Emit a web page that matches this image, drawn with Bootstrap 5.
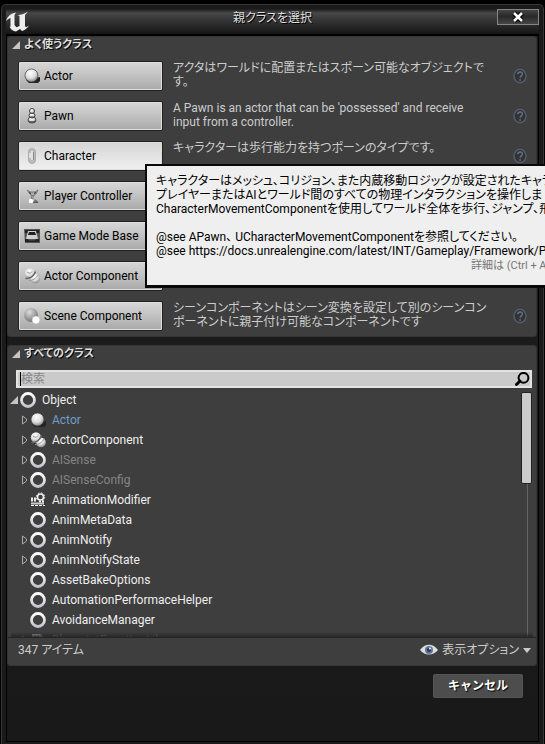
<!DOCTYPE html>
<html lang="ja">
<head>
<meta charset="utf-8">
<meta name="viewport" content="width=device-width, initial-scale=1">
<title>親クラスを選択</title>
<link href="https://cdn.jsdelivr.net/npm/bootstrap@5.3.0/dist/css/bootstrap.min.css" rel="stylesheet">
<style>
body{background:#000;color:#ccc;font:12px/14px Roboto,"Noto Sans CJK JP",sans-serif;font-feature-settings:"palt";overflow:hidden}
.window{margin:4px 1px 0;padding:4px 4px 2px;min-height:calc(100vh - 4px);background:#1a1a1a;border:1px solid #363636;border-bottom:0;border-radius:5px 5px 0 0}
.titlebar{height:25px;background:linear-gradient(#1c1c1c,#484848 4px,#353535 11px,#151515)}
.titlebar h1{font-size:12px;line-height:18px;color:#ddd;text-shadow:1px 1px #000}
.logo-slot{width:42px;line-height:0}
.close-btn{width:42px;height:16px;border:1px solid #858585;background:linear-gradient(#444,#292929 45%,#454545);line-height:0}
.client{border:1px solid #000;border-width:2px 1px 1px;background:linear-gradient(#1c1c1c,#191919);padding-right:1px}
.panel{background:#3e3e3e;border-radius:3px;border:1px solid #353535}
.panel h2{font-size:11px;line-height:16px;font-weight:700;color:#ddd;text-shadow:1px 1px #000}
.panel + .panel{margin-top:8px}
.tri{width:8px;height:8px}
.class-rows{padding:0 9px 0 10px}
.class-row{height:40px;gap:10px}
.class-row:last-child{height:35px}
.class-btn{width:145px;height:30px;border:1px solid #222;border-radius:2px;background:linear-gradient(#d8d8d8,#a9a9a9);box-shadow:inset 0 0 0 1px #ddd;color:#000;padding:0 5px;text-align:left}
.class-btn.hovered{background:linear-gradient(#d5d5d5,#f0f0f0)}
.ic{width:16px;height:16px;flex:none}
.help{line-height:0;padding-top:7px}
.search{background:#cacaca;border:2px solid #e2e4e2;height:18px;padding-left:2px}
.search input{background:none;border:0;outline:0;padding:0;height:14px;line-height:14px;color:#000}
.search input::placeholder{color:#888;opacity:1}
.caret{width:1px;height:14px;background:#000}
.tree-view{height:250px;overflow:hidden;position:relative;border-bottom:1px solid #252525}
.tree-view::after{content:"";position:absolute;inset:auto 3px 0;height:5px;background:linear-gradient(transparent,#222c)}
.tree-list{padding-top:2px}
.tree-list li{height:20px;color:#eee;padding-left:11px}
.tree-list li.root{padding-left:1px}
.tree-list .ic{margin:0 6px 0 2px}
.tree-list .used{color:#6f9fc9}
.tree-list .dim{color:#858585}
.tree-list .faded{opacity:.8}
.twist{width:9px;height:12px;border:0;padding:0;background:none;line-height:0;flex:none}
.track{width:11px;background:linear-gradient(90deg,transparent 6px,#666 6px,#666 7px,transparent 7px)}
.thumb{height:92px;background:#cbcbcb;border:1px solid #222;border-radius:2px}
.status{height:27px;padding:0 5px 3px 10px}
.view-options{font:inherit}
.cancel{width:90px;height:24px;background:#4d4d4d;border:1px solid #555;border-radius:2px;color:#fff;font-size:12px;font-weight:700;text-shadow:1px 1px 1px #000}
.actions{padding:8px 14px 0}
.tip{left:145px;top:164px;height:124px;border:2px solid #080808;border-width:2px 0 3px 2px;background:#efefef;color:#000;padding:8px 0 0 9px;white-space:nowrap}
.tip small{font-size:11px;line-height:14px;color:#777;margin-left:315px}
</style>
<script src="https://cdn.jsdelivr.net/npm/bootstrap@5.3.0/dist/js/bootstrap.bundle.min.js"></script>
</head>
<body>
<svg width="0" height="0" class="position-absolute" aria-hidden="true">
<defs>
<radialGradient id="ball" cx=".42" cy=".3" r=".75"><stop offset="0" stop-color="#fff"/><stop offset=".55" stop-color="#ddd"/><stop offset="1" stop-color="#777"/></radialGradient>
<radialGradient id="grey" cx=".4" cy=".3" r=".7"><stop offset="0" stop-color="#ddd"/><stop offset="1" stop-color="#777"/></radialGradient>
<linearGradient id="ringfill" x2="0" y2="1"><stop offset="0" stop-color="#fff"/><stop offset="1" stop-color="#c4c4cc"/></linearGradient>
<symbol id="open" viewBox="0 0 8 8"><path d="M8 0v8H0z" fill="#c5c5c5"/></symbol>
<symbol id="shut" viewBox="0 0 9 12"><path d="M3.500 2v8L7.500 7V5z" fill="none" stroke="#aaa"/></symbol>
<symbol id="actor" viewBox="0 0 16 16"><path d="M2 12l3 3h9l2-2v-4z" fill="#222"/><circle cx="7.500" cy="7.500" r="6.500" fill="url(#ball)" stroke="#444" stroke-width=".7"/></symbol>
<symbol id="pawn" viewBox="0 0 16 16"><g fill="url(#ball)" stroke="#444"><ellipse cx="8" cy="12" rx="4" ry="3"/><ellipse cx="8" cy="7.500" rx="3" ry="2.500"/><circle cx="8" cy="3" r="2.500"/></g><path d="M5 13c2 1 4 1 6 0M6 9h4" stroke="#444" fill="none"/></symbol>
<symbol id="capsule" viewBox="0 0 16 16"><rect x="4.500" y=".5" width="7" height="15" rx="3.500" fill="#bbb" stroke="#aaa"/><path d="M8 3v9M6 5v5" stroke="#eee" stroke-width="1.500"/><path d="M9.500 4v8" stroke="#888"/></symbol>
<symbol id="controller" viewBox="0 0 16 16"><path d="M3 2l3 2h5l3-2-2 4-3 2-3-2zM7 7l1 5M9.500 7l-1 5" fill="#aaa" stroke="#777"/><path d="M5 4.500l2 1M10 5.500l2-1" stroke="#333"/><circle cx="7" cy="13" r="2.300" fill="#fff"/><path d="M9 14.500h5l-3-3" stroke="#555" fill="#777"/></symbol>
<symbol id="mode" viewBox="0 0 16 16"><path d="M0 1h16v14H1z" fill="#555"/><path d="M1 2h14v3H1z" fill="#222"/><path d="M4 3h8l2 8H2z" fill="#d0d0d0"/><path d="M5 4h6l1 3H4z" fill="#222"/><path d="M1 11h3l1 1.500h6l1-1.500h3v3H1z" fill="#222"/></symbol>
<symbol id="component" viewBox="0 0 16 16"><circle cx="6" cy="5.500" r="5.200" fill="url(#ball)"/><circle cx="11" cy="10.500" r="4.800" fill="url(#ball)"/><path d="M1.500 10.500C6 11 10 8 11.500 3.500" stroke="#666" fill="none" stroke-width="1.500"/><path d="M5 12.500c4 0 7-2 9.500-6M3 4l3 1.500 2-2" stroke="#999" fill="none"/></symbol>
<symbol id="scene" viewBox="0 0 16 16"><circle cx="7" cy="7" r="7" fill="url(#grey)"/><circle cx="12" cy="12" r="4" fill="#fff" stroke="#aaa" stroke-width=".6"/></symbol>
<symbol id="ring" viewBox="0 0 16 16"><circle cx="8" cy="8" r="6.500" fill="none" stroke="url(#ringfill)" stroke-width="2.800"/></symbol>
<symbol id="modifier" viewBox="0 0 16 16"><circle cx="10.500" cy="5" r="3" fill="none" stroke="#eee" stroke-width="1.600"/><circle cx="10.500" cy="5" r="4.200" fill="none" stroke="#eee" stroke-dasharray="1.600 1.700"/><path d="M1 6.500h5M1 8.500h6m2 1h6" stroke="#eee" stroke-dasharray="2 1" stroke-width="2"/><path d="M1 10.500h13v2H1z" fill="#ccc"/><path d="M1 13.500h14" stroke="#eee" stroke-dasharray="3 1"/></symbol>
<symbol id="library" viewBox="0 0 16 16"><path d="M2 2h8l5 4v10H3z" fill="#aaa"/><path d="M5 4v9M8 4l3 9M5 8h6" stroke="#333" stroke-width="1.500"/></symbol>
<symbol id="question" viewBox="0 0 14 16"><ellipse cx="7" cy="8" rx="6" ry="6.700" fill="#303236" stroke="#505a68" stroke-width="1.500"/><path d="M4.800 6.200c0-3 4.600-3 4.600-.2C9.400 8 7.100 7.800 7.100 9.800" fill="none" stroke="#667180" stroke-width="1.500"/><circle cx="7.100" cy="12" r=".9" fill="#667180"/></symbol>
</defs>
</svg>

<main class="window d-flex flex-column">
  <header class="titlebar d-flex align-items-start">
    <div class="logo-slot"><svg width="24" height="24" viewBox="0 0 24 24"><path d="M0 12C1.500 7 5 4.500 10 3.500L8.500 6v10l2 2.200 3-1.200V7l-2-1c4 0 6-.8 10.500-3.500L19 6v11l1 1.200 3-1.700c-2 3-4 4.500-7 5.500l-2-2-4 2.500c-3-.5-5.500-2-6.500-5l1 .2V9C2.500 9.500 1.500 10.500 0 12z" fill="#eee"/></svg></div>
    <h1 class="flex-grow-1 text-center mb-0 fw-normal">親クラスを選択</h1>
    <button class="close-btn p-0" aria-label="閉じる"><svg width="12" height="12" viewBox="0 0 12 12"><path d="M2 2l8 8M10 2l-8 8" stroke="#000" stroke-width="5"/><path d="M2 2l8 8M10 2l-8 8" stroke="#fff" stroke-width="2.600"/></svg></button>
  </header>

  <div class="client flex-grow-1">
    <section class="panel">
      <h2 class="d-flex align-items-center gap-1 ps-1 mb-2"><svg class="tri"><use href="#open"/></svg>よく使うクラス</h2>
      <div class="class-rows">
        <div class="class-row d-flex"><button class="class-btn d-flex align-items-center gap-1"><svg class="ic"><use href="#actor"/></svg>Actor</button><div class="flex-grow-1">アクタはワールドに配置またはスポーン可能なオブジェクトで<br>す。</div><a href="#" class="help" aria-label="Actor ヘルプ"><svg width="14" height="16"><use href="#question"/></svg></a></div>
        <div class="class-row d-flex"><button class="class-btn d-flex align-items-center gap-1"><svg class="ic"><use href="#pawn"/></svg>Pawn</button><div class="flex-grow-1">A Pawn is an actor that can be 'possessed' and receive<br>input from a controller.</div><a href="#" class="help" aria-label="Pawn ヘルプ"><svg width="14" height="16"><use href="#question"/></svg></a></div>
        <div class="class-row d-flex"><button class="class-btn hovered d-flex align-items-center gap-1"><svg class="ic"><use href="#capsule"/></svg>Character</button><div class="flex-grow-1">キャラクターは歩行能力を持つポーンのタイプです。</div><a href="#" class="help" aria-label="Character ヘルプ"><svg width="14" height="16"><use href="#question"/></svg></a></div>
        <div class="class-row d-flex"><button class="class-btn d-flex align-items-center gap-1"><svg class="ic"><use href="#controller"/></svg>Player Controller</button></div>
        <div class="class-row d-flex"><button class="class-btn d-flex align-items-center gap-1"><svg class="ic"><use href="#mode"/></svg>Game Mode Base</button></div>
        <div class="class-row d-flex"><button class="class-btn d-flex align-items-center gap-1"><svg class="ic"><use href="#component"/></svg>Actor Component</button></div>
        <div class="class-row d-flex"><button class="class-btn d-flex align-items-center gap-1"><svg class="ic"><use href="#scene"/></svg>Scene Component</button><div class="flex-grow-1">シーンコンポーネントはシーン変換を設定して別のシーンコン<br>ポーネントに親子付け可能なコンポーネントです</div><a href="#" class="help" aria-label="Scene Component ヘルプ"><svg width="14" height="16"><use href="#question"/></svg></a></div>
      </div>
    </section>

    <section class="panel">
      <h2 class="d-flex align-items-center gap-1 ps-1 mb-2"><svg class="tri"><use href="#open"/></svg>すべてのクラス</h2>
      <div class="search d-flex align-items-center ms-2 me-1"><span class="caret"></span><input class="flex-grow-1" type="text" placeholder="検索" aria-label="検索"><svg width="15" height="14" viewBox="0 0 15 14"><circle cx="8.500" cy="5.800" r="4.900" fill="none" stroke="#000" stroke-width="2"/><path d="M5 9l-3.500 3.500" stroke="#000" stroke-width="3" stroke-linecap="round"/></svg></div>
      <div class="tree-view d-flex">
        <ul class="tree-list list-unstyled flex-grow-1 mb-0">
          <li class="root d-flex align-items-center"><button class="twist" aria-label="Object を閉じる"><svg width="8" height="8"><use href="#open"/></svg></button><svg class="ic"><use href="#ring"/></svg><span>Object</span></li>
          <li class="used d-flex align-items-center"><button class="twist" aria-label="Actor を開く"><svg width="9" height="12"><use href="#shut"/></svg></button><svg class="ic"><use href="#actor"/></svg><span>Actor</span></li>
          <li class="d-flex align-items-center"><button class="twist" aria-label="ActorComponent を開く"><svg width="9" height="12"><use href="#shut"/></svg></button><svg class="ic"><use href="#component"/></svg><span>ActorComponent</span></li>
          <li class="dim d-flex align-items-center"><button class="twist" aria-label="AISense を開く"><svg width="9" height="12"><use href="#shut"/></svg></button><svg class="ic"><use href="#ring"/></svg><span>AISense</span></li>
          <li class="dim d-flex align-items-center"><button class="twist" aria-label="AISenseConfig を開く"><svg width="9" height="12"><use href="#shut"/></svg></button><svg class="ic"><use href="#ring"/></svg><span>AISenseConfig</span></li>
          <li class="d-flex align-items-center"><span class="twist"></span><svg class="ic"><use href="#modifier"/></svg><span>AnimationModifier</span></li>
          <li class="d-flex align-items-center"><span class="twist"></span><svg class="ic"><use href="#ring"/></svg><span>AnimMetaData</span></li>
          <li class="d-flex align-items-center"><button class="twist" aria-label="AnimNotify を開く"><svg width="9" height="12"><use href="#shut"/></svg></button><svg class="ic"><use href="#ring"/></svg><span>AnimNotify</span></li>
          <li class="d-flex align-items-center"><button class="twist" aria-label="AnimNotifyState を開く"><svg width="9" height="12"><use href="#shut"/></svg></button><svg class="ic"><use href="#ring"/></svg><span>AnimNotifyState</span></li>
          <li class="d-flex align-items-center"><span class="twist"></span><svg class="ic"><use href="#ring"/></svg><span>AssetBakeOptions</span></li>
          <li class="d-flex align-items-center"><span class="twist"></span><svg class="ic"><use href="#ring"/></svg><span>AutomationPerformaceHelper</span></li>
          <li class="d-flex align-items-center"><span class="twist"></span><svg class="ic"><use href="#ring"/></svg><span>AvoidanceManager</span></li>
          <li class="dim faded d-flex align-items-center"><button class="twist" aria-label="BlueprintFunctionLibrary を開く"><svg width="9" height="12"><use href="#shut"/></svg></button><svg class="ic"><use href="#library"/></svg><span>BlueprintFunctionLibrary</span></li>
        </ul>
        <div class="track mt-1 me-1"><div class="thumb"></div></div>
      </div>
      <div class="status d-flex align-items-center justify-content-between"><span>347 アイテム</span>
        <button class="btn view-options p-0 border-0 d-flex align-items-center gap-1 text-reset"><svg width="18" height="12" viewBox="0 0 18 12"><path d="M0 6c5-7 13-7 18 0-5 6-13 6-18 0z" fill="#ddd"/><circle cx="9" cy="6" r="4" fill="#5f779d"/><circle cx="9" cy="6" r="2" fill="#263956"/><circle cx="10" cy="4.500" r="1" fill="#fff"/></svg>表示オプション<svg width="8" height="5" viewBox="0 0 8 5"><path d="M0 0h8L4 5z" fill="#ccc"/></svg></button></div>
    </section>
    <footer class="actions d-flex justify-content-end"><button class="cancel p-0">キャンセル</button></footer>
  </div>
</main>
<div class="tip position-absolute end-0 overflow-hidden" role="tooltip">キャラクターはメッシュ、コリジョン、また内蔵移動ロジックが設定されたキャラ<br>プレイヤーまたはAIとワールド間のすべての物理インタラクションを操作しま<br>CharacterMovementComponentを使用してワールド全体を歩行、ジャンプ、飛<br><br>@see APawn、 UCharacterMovementComponentを参照してください。<br>@see https://docs.unrealengine.com/latest/INT/Gameplay/Framework/P<br><small>詳細は (Ctrl + A</small></div>
</body>
</html>
